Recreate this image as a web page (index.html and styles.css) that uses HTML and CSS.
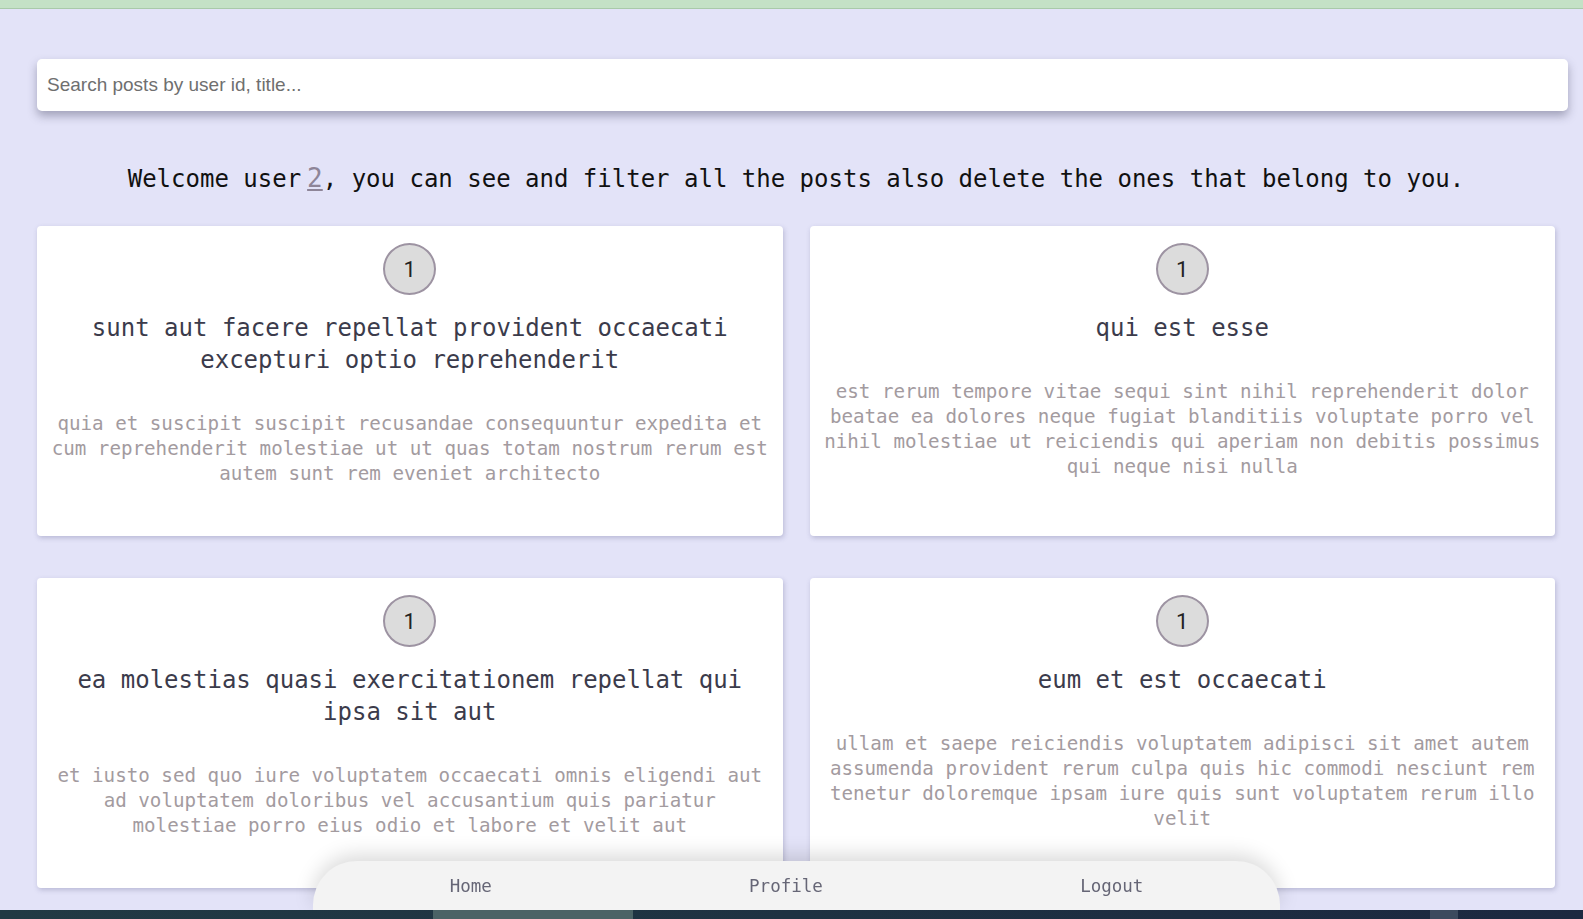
FILE: index.html
```html
<!DOCTYPE html>
<html lang="en">
<head>
<meta charset="utf-8">
<title>Posts</title>
<link rel="stylesheet" href="styles.css">
</head>
<body>
<div class="topbar"></div>
<main class="content">
  <input class="search" type="text" placeholder="Search posts by user id, title...">
  <h1 class="welcome">Welcome user<a class="user-id" href="#">2</a>, you can see and filter all the posts also delete the ones that belong to you.</h1>
  <section class="grid">
    <article class="card">
      <div class="badge">1</div>
      <h2 class="title">sunt aut facere repellat provident occaecati excepturi optio reprehenderit</h2>
      <p class="body">quia et suscipit suscipit recusandae consequuntur expedita et cum reprehenderit molestiae ut ut quas totam nostrum rerum est autem sunt rem eveniet architecto</p>
    </article>
    <article class="card">
      <div class="badge">1</div>
      <h2 class="title">qui est esse</h2>
      <p class="body">est rerum tempore vitae sequi sint nihil reprehenderit dolor beatae ea dolores neque fugiat blanditiis voluptate porro vel nihil molestiae ut reiciendis qui aperiam non debitis possimus qui neque nisi nulla</p>
    </article>
    <article class="card">
      <div class="badge">1</div>
      <h2 class="title">ea molestias quasi exercitationem repellat qui ipsa sit aut</h2>
      <p class="body">et iusto sed quo iure voluptatem occaecati omnis eligendi aut ad voluptatem doloribus vel accusantium quis pariatur molestiae porro eius odio et labore et velit aut</p>
    </article>
    <article class="card">
      <div class="badge">1</div>
      <h2 class="title">eum et est occaecati</h2>
      <p class="body">ullam et saepe reiciendis voluptatem adipisci sit amet autem assumenda provident rerum culpa quis hic commodi nesciunt rem tenetur doloremque ipsam iure quis sunt voluptatem rerum illo velit</p>
    </article>
  </section>
</main>
<nav class="bottom-nav">
  <a href="#" class="nav-link">Home</a>
  <a href="#" class="nav-link">Profile</a>
  <a href="#" class="nav-link">Logout</a>
</nav>
<div class="taskbar">
  <span class="seg seg-a"></span>
  <span class="seg seg-b"></span>
  <span class="seg seg-c"></span>
  <span class="seg seg-d"></span>
  <span class="seg seg-e"></span>
</div>
</body>
</html>
```

FILE: styles.css
```css
html, body {
  margin: 0;
  height: 100%;
  overflow: hidden;
}
body {
  background: #e3e3f8;
  font-family: "DejaVu Sans Mono", "Liberation Mono", monospace;
  color: #111;
}
.topbar {
  height: 8px;
  background: #c4e1c6;
  border-bottom: 1px solid #a9c9aa;
}
.content {
  padding: 0 15px 0 37px;
}
.search {
  display: block;
  box-sizing: border-box;
  width: 100%;
  height: 52px;
  margin: 50px 0 0 0;
  padding: 0 10px;
  border: none;
  border-radius: 5px;
  background: #fff;
  box-shadow: 0 5px 10px rgba(40, 40, 70, 0.35);
  font-family: "Liberation Sans", Arial, sans-serif;
  font-size: 19px;
  outline: none;
}
.search::placeholder {
  color: #6f6f6f;
}
.welcome {
  margin: 51px 13px 31px 0;
  font-size: 24px;
  line-height: 32px;
  font-weight: normal;
  text-align: center;
  color: #111;
}
.user-id {
  color: #8e8598;
  font-size: 26px;
  margin-left: 6px;
  text-decoration: underline;
}
.grid {
  display: grid;
  grid-template-columns: 1fr 1fr;
  grid-auto-rows: 310px;
  column-gap: 27px;
  row-gap: 42px;
  margin-right: 13px;
}
.card {
  box-sizing: border-box;
  background: #fff;
  border-radius: 4px;
  box-shadow: 1px 2px 5px rgba(60, 60, 110, 0.25);
  padding: 17px 14px;
  display: flex;
  flex-direction: column;
  align-items: center;
  text-align: center;
}
.badge {
  box-sizing: border-box;
  width: 53px;
  height: 52px;
  border-radius: 50%;
  border: 2px solid #9d93a2;
  background: #dcdcdc;
  display: flex;
  align-items: center;
  justify-content: center;
  font-family: "Roboto", "Liberation Sans", Arial, sans-serif;
  font-size: 22px;
  color: #222;
  flex-shrink: 0;
}
.title {
  margin: 17px 0 0 0;
  font-size: 24px;
  line-height: 32px;
  font-weight: normal;
  color: #3b3b4b;
}
.body {
  margin: 35px 0 0 0;
  font-size: 19.2px;
  line-height: 25px;
  color: #a39b9f;
}
.bottom-nav {
  position: fixed;
  left: 313px;
  bottom: 9px;
  box-sizing: border-box;
  width: 967px;
  height: 49px;
  padding: 0 8px;
  background: #f3f3f3;
  border-radius: 44px 44px 0 0;
  box-shadow: 0 -6px 20px rgba(0, 0, 0, 0.15);
  display: flex;
  align-items: center;
  justify-content: space-around;
}
.nav-link {
  font-size: 17.5px;
  color: #666676;
  text-decoration: none;
}
.taskbar {
  position: fixed;
  left: 0;
  right: 0;
  bottom: 0;
  height: 9px;
  display: grid;
  grid-template-columns: 433px 200px 797px 28px 1fr;
  background: linear-gradient(90deg, #213a44 0%, #1e3242 50%, #1c2840 100%);
}
.seg-b {
  background: #4b6366;
}
.seg-d {
  background: #3c4a5e;
}
```
